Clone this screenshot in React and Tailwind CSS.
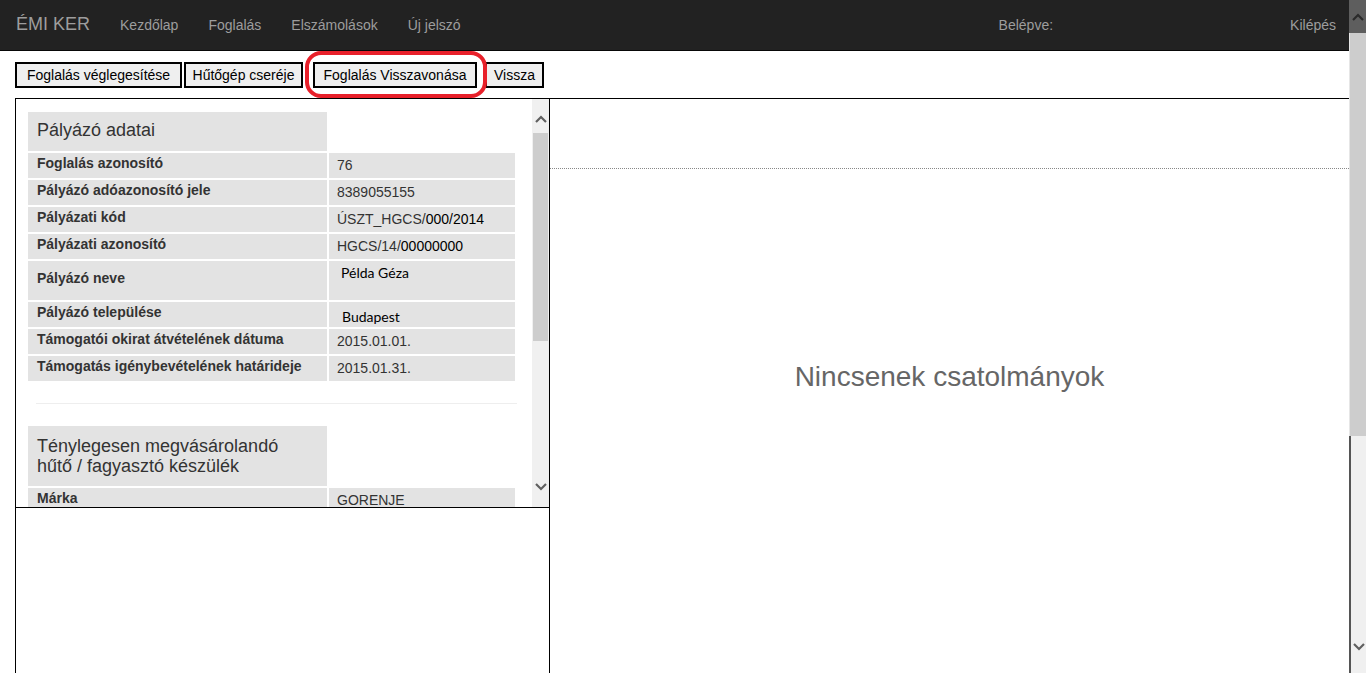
import React from "react";

const rows = [
  { label: "Foglalás azonosító", value: <span>76</span>, h: "h-[25px]" },
  { label: "Pályázó adóazonosító jele", value: <span>8389055155</span>, h: "h-[25px]" },
  {
    label: "Pályázati kód",
    value: (
      <span>
        ÚSZT_HGCS/<span className="text-black">000/2014</span>
      </span>
    ),
    h: "h-[25px]",
  },
  {
    label: "Pályázati azonosító",
    value: (
      <span>
        HGCS/14/<span className="text-black">00000000</span>
      </span>
    ),
    h: "h-[25px]",
  },
  {
    label: "Pályázó neve",
    value: <span className="font-['Lato',sans-serif] text-black text-[14px] pl-[4px]">Példa Géza</span>,
    h: "h-[39px]",
    top: true,
  },
  {
    label: "Pályázó települése",
    value: <span className="font-['Lato',sans-serif] text-black text-[14px] pl-[5px]">Budapest</span>,
    h: "h-[25px]",
    low: true,
  },
  { label: "Támogatói okirat átvételének dátuma", value: <span>2015.01.01.</span>, h: "h-[25px]" },
  { label: "Támogatás igénybevételének határideje", value: <span>2015.01.31.</span>, h: "h-[25px]" },
];

function Chevron({ up, className }) {
  return (
    <svg width="12" height="8" viewBox="0 0 12 8" className={className}>
      <polyline
        points={up ? "1,7 6,2 11,7" : "1,1 6,6 11,1"}
        fill="none"
        stroke="currentColor"
        strokeWidth="2.2"
      />
    </svg>
  );
}

function Row({ label, value, h, top, low }) {
  let valueCls = "align-middle pt-0 pb-[1px]";
  if (top) valueCls = "align-top pt-[4px]";
  if (low) valueCls = "align-middle pt-[4px]";
  return (
    <tr className={h}>
      <td className="p-0 bg-[#e3e3e3] w-[299px] pl-[9px] pb-[5px] align-middle font-bold text-[14px] leading-[16px] text-[#333]">
        {label}
      </td>
      <td className={"p-0 bg-[#e3e3e3] w-[186px] pl-[8px] text-[14px] leading-[16px] text-[#333] " + valueCls}>
        {value}
      </td>
    </tr>
  );
}

export default function App() {
  const nav = ["Kezdőlap", "Foglalás", "Elszámolások", "Új jelszó"];
  return (
    <div className="flex h-[673px] overflow-hidden bg-white font-['Liberation_Sans',Arial,sans-serif]">
      <div className="flex-1 flex flex-col min-w-0">
        {/* navbar */}
        <div className="h-[51px] shrink-0 bg-[#222] border-b border-[#080808] flex items-center text-[#9d9d9d]">
          <span className="ml-[16px] text-[18px] pb-[1px]">ÉMI KER</span>
          <div className="flex ml-[15px] text-[14px]">
            {nav.map((n) => (
              <span key={n} className="px-[15px]">
                {n}
              </span>
            ))}
          </div>
          <span className="ml-auto text-[14px] mr-[237px]">Belépve:</span>
          <span className="text-[14px] mr-[13px]">Kilépés</span>
        </div>

        {/* buttons */}
        <div className="h-[47px] shrink-0 pt-[11px] pl-[15px] flex items-start text-[14px] text-black">
          <button className="w-[167px] h-[26px] border-2 border-black bg-[#efefef]">Foglalás véglegesítése</button>
          <button className="ml-[2px] w-[119px] h-[26px] border-2 border-black bg-[#efefef]">Hűtőgép cseréje</button>
          <div className="relative ml-[10px]">
            <button className="w-[164px] h-[26px] border-2 border-black bg-[#efefef]">Foglalás Visszavonása</button>
            <span className="absolute left-[-8px] right-[-10px] top-[-11px] bottom-[-10px] border-[4px] border-[#e8202a] rounded-[16px] pointer-events-none"></span>
          </div>
          <button className="ml-[8px] w-[59px] h-[26px] border-2 border-black bg-[#efefef]">Vissza</button>
        </div>

        {/* main */}
        <div className="flex-1 flex border-t border-black ml-[15px] min-h-0">
          <div className="w-[535px] shrink-0 border-l border-r border-black flex flex-col">
            <div className="h-[409px] shrink-0 border-b border-black flex">
              <div className="flex-1 overflow-hidden pl-[10px] pt-[11px]">
                <table className="border-separate border-spacing-[2px]">
                  <tbody>
                    <tr className="h-[39px]">
                      <td className="p-0 bg-[#e3e3e3] pl-[9px] pb-[2px] text-[18px] text-[#333] align-middle">
                        Pályázó adatai
                      </td>
                      <td className="p-0"></td>
                    </tr>
                    {rows.map((r) => (
                      <Row key={r.label} {...r} />
                    ))}
                  </tbody>
                </table>
                <div className="ml-[10px] mr-[15px] mt-[20px] mb-[20px] border-t border-[#eee]"></div>
                <table className="border-separate border-spacing-[2px]">
                  <tbody>
                    <tr className="h-[60px]">
                      <td className="p-0 bg-[#e3e3e3] w-[299px] pl-[9px] text-[18px] leading-[20px] text-[#333] align-middle">
                        Ténylegesen megvásárolandó
                        <br />
                        hűtő / fagyasztó készülék
                      </td>
                      <td className="p-0 w-[186px]"></td>
                    </tr>
                    <Row label="Márka" value={<span>GORENJE</span>} h="h-[25px]" />
                  </tbody>
                </table>
              </div>
              <div className="w-[17px] shrink-0 bg-[#f0f0f0] flex flex-col items-center">
                <div className="h-[34px] pt-[5px] flex items-center justify-center text-[#606060]">
                  <Chevron up />
                </div>
                <div className="w-[15px] h-[208px] bg-[#cdcdcd]"></div>
                <div className="flex-1"></div>
                <div className="h-[32px] flex items-center justify-center text-[#606060] pb-[8px]">
                  <Chevron />
                </div>
              </div>
            </div>
            <div className="flex-1"></div>
          </div>
          <div className="flex-1 flex flex-col">
            <div className="h-[70px] shrink-0 border-b border-dotted border-[#888]"></div>
            <div className="pt-[192px] text-center text-[28px] leading-[32px] text-[#666]">Nincsenek csatolmányok</div>
          </div>
        </div>
      </div>

      {/* page scrollbar */}
      <div className="w-[17px] shrink-0 flex flex-col">
        <div className="h-[33px] bg-[#5e5e5e] flex items-center justify-center text-[#2a2a2a]">
          <Chevron up />
        </div>
        <div className="h-[403px] bg-[#cdcdcd] border-l border-[#e6e6e6]"></div>
        <div className="flex-1 bg-[#f0f0f0] border-l-2 border-[#555] flex flex-col justify-end items-center">
          <div className="h-[34px] flex items-start justify-center pt-[4px] text-[#606060]">
            <Chevron />
          </div>
        </div>
      </div>
    </div>
  );
}
